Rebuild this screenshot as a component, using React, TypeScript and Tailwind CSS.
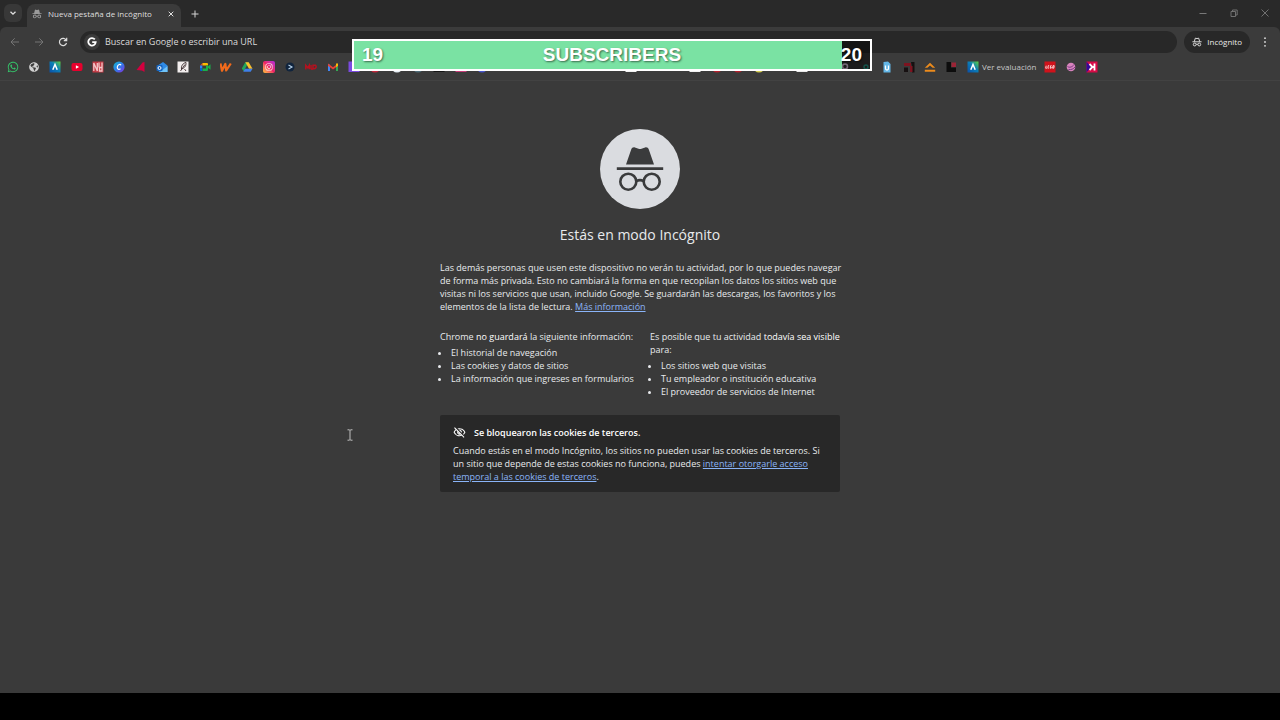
import type { ReactNode } from "react";
import { FaWhatsapp, FaGlobeAmericas, FaInstagram } from "react-icons/fa";

function Svg({ children, box = "0 0 12 12" }: { children: ReactNode; box?: string }) {
  return (
    <svg viewBox={box} className="size-3 shrink-0" aria-hidden="true">
      {children}
    </svg>
  );
}

function IncognitoGlyph({ className }: { className: string }) {
  return (
    <svg viewBox="0 0 24 24" className={className} aria-hidden="true" fill="currentColor">
      <path d="M17.1 2.600c-.2-.9-1.100-1.400-2-1.100L12 2.300l-3.100-.8c-.9-.3-1.800.2-2 1.100L5 9.900H1v2.300h22V9.900h-4z" />
      <path d="M17.300 13.200c-1.900 0-3.400 1.100-4 2.700-.8-.4-1.800-.4-2.600 0-.6-1.600-2.100-2.700-4-2.700a4.600 4.600 0 1 0 4.500 5c.5-.3 1.100-.3 1.600 0a4.600 4.600 0 1 0 4.500-5zM6.700 20.100a2.300 2.300 0 1 1 0-4.600 2.300 2.300 0 0 1 0 4.600zm10.600 0a2.300 2.300 0 1 1 0-4.600 2.300 2.300 0 0 1 0 4.600z" />
    </svg>
  );
}

function BadgeIncognito() {
  return (
    <svg viewBox="0 0 24 24" className="size-[10px]" aria-hidden="true" fill="none" stroke="currentColor" strokeWidth="2.200">
      <path d="M1 11.500h22M5.500 11 8 2.800l4 1 4-1 2.500 8.200" />
      <circle cx="6.500" cy="18" r="3.400" />
      <circle cx="17.500" cy="18" r="3.400" />
      <path d="M10 17.600c1.300-.7 2.700-.7 4 0" />
    </svg>
  );
}

function BigIncognito() {
  return (
    <svg viewBox="0 0 80 80" className="size-20" aria-hidden="true">
      <circle cx="40" cy="40" r="40" fill="#dadce0" />
      <g fill="#3a3b3c">
        <path d="M26 35.500 31.200 20.500c.6-1.700 2-2.500 3.700-2l3.600 1.200c1 .3 2 .3 3 0l3.600-1.200c1.700-.5 3.100.3 3.700 2L54 35.500z" />
        <path d="M16.800 38.200h46.400v2.700H16.800z" />
      </g>
      <g fill="none" stroke="#3a3b3c" strokeWidth="2.600">
        <circle cx="28.300" cy="52.700" r="8" />
        <circle cx="51.700" cy="52.700" r="8" />
        <path d="M36.300 52.200c2.300-1.300 5.100-1.300 7.400 0" />
      </g>
    </svg>
  );
}

function BlueA() {
  return (
    <Svg>
      <defs>
        <linearGradient id="sky" x1="0" y1="1" x2="1" y2="0">
          <stop offset="0" stopColor="#0a4fa8" />
          <stop offset=".55" stopColor="#0b7fb8" />
          <stop offset="1" stopColor="#5fd23c" />
        </linearGradient>
      </defs>
      <path d="M.5.500h11v11H.5z" fill="url(#sky)" />
      <path d="M3.800 8.800 6 3.500l2.200 5.300" fill="none" stroke="#fff" strokeWidth="1.500" />
    </Svg>
  );
}

function Sliver({ color, round = false }: { color: string; round?: boolean }) {
  return (
    <Svg>
      {round ? <circle cx="6" cy="6" r="5.500" fill={color} /> : <path d="M.5.500h11v10.500H.5z" fill={color} />}
    </Svg>
  );
}

type Bookmark = { name: string; icon: ReactNode };

const hidden = (name: string, color: string, round = false): Bookmark => ({
  name,
  icon: <Sliver color={color} round={round} />,
});

const none = "transparent";

const bookmarks: Bookmark[] = [
  { name: "WhatsApp", icon: <FaWhatsapp className="size-3 text-[#35c46a]" /> },
  { name: "Web", icon: <FaGlobeAmericas className="size-3 p-px text-[#d0d0d0]" /> },
  { name: "Aula", icon: <BlueA /> },
  {
    name: "YouTube",
    icon: (
      <Svg>
        <rect x=".5" y="2" width="11" height="8" rx="2" fill="#e8002d" />
        <path d="m4.900 4.300 3.200 1.700-3.200 1.700z" fill="#fff" />
      </Svg>
    ),
  },
  {
    name: "Nd",
    icon: (
      <Svg>
        <path d="M.5.500h11v11H.5z" fill="#c33a45" />
        <path d="M1.800 10V2l3.500 8V2M7 1.500v5M10 1.500V10H7.500V6.500H10" fill="none" stroke="#f3c6c8" strokeWidth="1.300" />
      </Svg>
    ),
  },
  {
    name: "Canva",
    icon: (
      <Svg>
        <defs>
          <linearGradient id="canva" x1="0" y1="0" x2="1" y2="1">
            <stop offset="0" stopColor="#12bcd0" />
            <stop offset=".5" stopColor="#2f7be8" />
            <stop offset="1" stopColor="#8a2be2" />
          </linearGradient>
        </defs>
        <circle cx="6" cy="6" r="5.600" fill="url(#canva)" />
        <path d="M8 4.300C7.400 2.800 5.200 3.300 4.500 5.200c-.8 2.300.6 4.200 3 2.500" fill="none" stroke="#fff" strokeWidth="1.200" />
      </Svg>
    ),
  },
  {
    name: "Red",
    icon: (
      <Svg>
        <path d="M1.500 9 7.500 1.500l2-.5v10L7 9.500z" fill="#d3003f" />
      </Svg>
    ),
  },
  {
    name: "Outlook",
    icon: (
      <Svg>
        <path d="m1 5 6-4 4.500 3.500v6.500H3z" fill="#2f8be6" />
        <path d="m4 11 7.500-6v6z" fill="#6fc3f7" />
        <rect x=".5" y="4" width="6" height="6" rx="1" fill="#1565c0" />
        <circle cx="3.500" cy="7" r="1.500" fill="none" stroke="#fff" />
      </Svg>
    ),
  },
  {
    name: "Pluma",
    icon: (
      <Svg>
        <path d="M.5.500h11v11H.5z" fill="#f2eeee" />
        <path d="M4.500 8C4 5 6 2 9 1.500 9.200 4.500 8 7 4.500 8zM3.500 10 8 3.500M7.500 8l1.500 2" fill="none" stroke="#39292b" strokeWidth=".9" />
      </Svg>
    ),
  },
  {
    name: "Meet",
    icon: (
      <Svg>
        <path d="M1 4.500 3.500 2v2.500z" fill="#ea4335" />
        <path d="M1 4.500h2.300v3H1z" fill="#2684fc" />
        <path d="M1 7.500h2.300V10H2a1 1 0 0 1-1-1z" fill="#0066da" />
        <path d="M3.500 2H8a1 1 0 0 1 1 1v1.500H3.500z" fill="#ffba00" />
        <path d="M3.500 7.500H7V4.500h2v1l2.500-2.200v5.500L9 6.800V9a1 1 0 0 1-1 1H3.500z" fill="#18b04b" />
      </Svg>
    ),
  },
  {
    name: "W",
    icon: (
      <Svg>
        <path d="m.5 2.500 1.500 7.200L5.300 3l.9 6.500L10.800 2.500" fill="none" stroke="#f26a1b" strokeWidth="2.200" strokeLinejoin="round" />
      </Svg>
    ),
  },
  {
    name: "Drive",
    icon: (
      <Svg>
        <path d="M4.300 1.300h3.400l-5 8.900L.8 7.500z" fill="#22a65a" />
        <path d="M4.300 1.300h3.400l3.800 6.400H8z" fill="#fbc02d" />
        <path d="M3.900 7.700h7.600L9.700 10.700H2.300z" fill="#3f7fe8" />
      </Svg>
    ),
  },
  {
    name: "Instagram",
    icon: (
      <span className="grid size-3 place-items-center rounded-xs bg-linear-to-tr from-[#ffc02e] via-[#ee1f63] to-[#b41be0]">
        <FaInstagram className="size-2 text-white" />
      </span>
    ),
  },
  {
    name: "Flecha",
    icon: (
      <Svg>
        <circle cx="6" cy="6" r="4.500" fill="#10243d" />
        <path d="m4.500 4 3.500 2-3.500 2" fill="none" stroke="#b8d4ec" strokeWidth="1.100" />
      </Svg>
    ),
  },
  {
    name: "MU",
    icon: (
      <Svg>
        <path d="M.8 8.500V4.300l2 2.500 1.500-2.500v3.900M6 4v3.200c0 1.500 2 1 2 0V4.200h2.500c1.300 1.500.5 3.800-2 3.600" fill="none" stroke="#b5121f" strokeWidth="1.500" />
      </Svg>
    ),
  },
  {
    name: "Gmail",
    icon: (
      <Svg>
        <path d="M1 3.500h2v6.500H1z" fill="#4285f4" />
        <path d="M9 3.500h2v6.500H9z" fill="#34a853" />
        <path d="m1 2.500 5 3.800 5-3.800v2.300L6 8.500 1 4.800z" fill="#ea4335" />
        <path d="M9 4V2.500h2v2.300L9 6.200z" fill="#fbbc04" />
      </Svg>
    ),
  },
  hidden("Enlace 17", "#7b4be0"),
  hidden("Enlace 18", "#c2273b", true),
  hidden("Enlace 19", "#e6eef5", true),
  hidden("Enlace 20", "#4f6c78", true),
  hidden("Enlace 21", "#151515"),
  hidden("Enlace 22", "#c93a78"),
  hidden("Enlace 23", "#4856cf", true),
  hidden("Enlace 24", none),
  hidden("Enlace 25", none),
  hidden("Enlace 26", none),
  hidden("Enlace 27", none),
  hidden("Enlace 28", none),
  hidden("Enlace 29", none),
  hidden("Enlace 30", "#f1f1f1"),
  hidden("Enlace 31", none),
  hidden("Enlace 32", none),
  hidden("Enlace 33", "#f1f1f1"),
  hidden("Enlace 34", "#b3202c", true),
  hidden("Enlace 35", "#b3202c", true),
  hidden("Enlace 36", "#d6cf52", true),
  hidden("Enlace 37", none),
  hidden("Enlace 38", "#e9e9e9"),
  hidden("Enlace 39", none),
  {
    name: "Enlace 40",
    icon: (
      <Svg>
        <circle cx="6" cy="5.500" r="2.500" fill="none" stroke="#f0d4f2" strokeWidth="1.500" />
      </Svg>
    ),
  },
  {
    name: "Enlace 41",
    icon: (
      <Svg>
        <circle cx="6" cy="6" r="2" fill="none" stroke="#26a896" strokeWidth="1.400" />
      </Svg>
    ),
  },
  {
    name: "U",
    icon: (
      <Svg>
        <path d="M2.500 1 7 .5 9.500 3v8.500h-7z" fill="#63b6e6" />
        <path d="M4.500 4.500v3c0 2 3 2 3 0v-3" fill="none" stroke="#fff" strokeWidth="1.300" />
      </Svg>
    ),
  },
  {
    name: "Rojo",
    icon: (
      <Svg>
        <path d="M1 6.500h4V11H1zM8 1h3.500v10.500H9V6z" fill="#161011" />
        <path d="M1 2h7v3H1zM7 5h2.500v6H7z" fill="#7d1420" />
      </Svg>
    ),
  },
  {
    name: "Naranja",
    icon: (
      <Svg>
        <path d="m.8 6.800 5.200-5 5.200 5H8.600L6 4.400 3.400 6.800zM.8 8.800h10.400v2H.8z" fill="#ec8b1c" />
      </Svg>
    ),
  },
  {
    name: "L",
    icon: (
      <Svg>
        <path d="M1.500 1H6v5.500h5V11H1.500z" fill="#0d0d0d" />
        <path d="M6.500 1.500h4.500V6H6.500z" fill="#9c2436" />
      </Svg>
    ),
  },
];

const trailing: Bookmark[] = [
  {
    name: "LEGO",
    icon: (
      <Svg>
        <path d="M.5.500h11v11H.5z" fill="#d0121b" />
        <path d="M2.200 4.700 1.700 7.200h1.200M5.200 4.700H4.200L3.800 7.200h1M7.600 4.700h-1L6.200 7.200h1l.2-1M9 4.700h1.200L9.800 7.200H8.600z" fill="none" stroke="#fff" strokeWidth=".8" />
      </Svg>
    ),
  },
  {
    name: "Esfera",
    icon: (
      <Svg>
        <circle cx="6" cy="6" r="4.300" fill="#d884bd" />
        <path d="M2.500 5.500c2 1.500 5 .5 6.500-2M3.500 8.500c2.500.5 5-.5 6.500-2.500" fill="none" stroke="#783a86" strokeWidth="1" />
      </Svg>
    ),
  },
  {
    name: "K",
    icon: (
      <Svg>
        <path d="M.5.500h11v11H.5z" fill="#d70b47" />
        <path d="M.5.500 5 6 .5 11.500z" fill="#320a9a" />
        <path d="M8.500 2.500v7M3.500 3l3 3-3 3M6 6h2.500" fill="none" stroke="#fff" strokeWidth="1.800" />
      </Svg>
    ),
  },
];

function BookmarkLink({ name, icon }: Bookmark) {
  return (
    <a href="#" aria-label={name} className="block size-3 shrink-0">
      {icon}
    </a>
  );
}

function inThrees(items: Bookmark[]) {
  const groups: Bookmark[][] = [];
  for (let i = 0; i < items.length; i += 3) groups.push(items.slice(i, i + 3));
  return groups;
}

function TabStrip() {
  return (
    <div className="flex h-[27px] items-end pr-1 pl-1">
      <button aria-label="Buscar pestañas" className="mb-[5px] grid size-[18px] place-items-center rounded-md bg-[#383838] text-[#e0e0e0]">
        <svg viewBox="0 0 8 8" className="size-2" fill="none" stroke="currentColor" strokeWidth="1.300">
          <path d="m1.500 2.700 2.500 2.500 2.500-2.500" />
        </svg>
      </button>
      <div className="ml-[5px] flex h-[23px] w-[154px] items-center rounded-t-lg bg-[#3b3b3b] pr-[5px] pb-[3px] pl-[5px] text-[#dfdfdf]">
        <IncognitoGlyph className="size-[10px] text-[#9a9a9a]" />
        <span className="ml-[6px] flex-1 text-[8px] whitespace-nowrap">Nueva pestaña de incógnito</span>
        <button aria-label="Cerrar pestaña" className="grid size-[10px] place-items-center">
          <svg viewBox="0 0 8 8" className="size-2" fill="none" stroke="currentColor">
            <path d="m1.700 1.700 4.600 4.600M6.300 1.700 1.700 6.300" />
          </svg>
        </button>
      </div>
      <button aria-label="Nueva pestaña" className="mb-2 ml-[9px] text-[#d5d5d5]">
        <svg viewBox="0 0 10 10" className="size-[10px]" fill="none" stroke="currentColor">
          <path d="M5 1.500v7M1.500 5h7" />
        </svg>
      </button>
      <div className="mb-[9px] ml-auto flex items-center gap-[21px] pr-[6px] text-[#787878]">
        <button aria-label="Minimizar">
          <svg viewBox="0 0 10 10" className="size-[10px]" fill="none" stroke="currentColor">
            <path d="M1.500 5.500h7" />
          </svg>
        </button>
        <button aria-label="Restaurar">
          <svg viewBox="0 0 10 10" className="size-[10px]" fill="none" stroke="currentColor" strokeWidth=".9">
            <path d="M2 3.500h4.500V8.500H2zM3.500 3.500V2H8.200v5H6.500" />
          </svg>
        </button>
        <button aria-label="Cerrar">
          <svg viewBox="0 0 10 10" className="size-[10px]" fill="none" stroke="currentColor" strokeWidth=".9">
            <path d="m1.500 1.500 7 7M8.500 1.500l-7 7" />
          </svg>
        </button>
      </div>
    </div>
  );
}

function Toolbar() {
  return (
    <div className="flex h-[30px] items-center pr-[10px] pl-[9px]">
      <button aria-label="Atrás" className="text-[#757575]">
        <svg viewBox="0 0 12 12" className="size-3" fill="none" stroke="currentColor">
          <path d="M10 6H2M5.700 2.300 2 6l3.700 3.700" />
        </svg>
      </button>
      <button aria-label="Adelante" className="ml-3 text-[#757575]">
        <svg viewBox="0 0 12 12" className="size-3" fill="none" stroke="currentColor">
          <path d="M2 6h8M6.300 2.300 10 6 6.300 9.700" />
        </svg>
      </button>
      <button aria-label="Volver a cargar" className="ml-3 text-[#dcdcdc]">
        <svg viewBox="0 0 12 12" className="size-3" fill="none" stroke="currentColor" strokeWidth="1.200">
          <path d="M9.200 4.200A3.600 3.600 0 1 0 9.500 7M9.700 1.800v2.900H6.800" />
        </svg>
      </button>
      <label className="ml-[11px] flex h-[22px] flex-1 items-center gap-[5px] rounded-full bg-[#282828] pl-1">
        <span className="grid size-4 place-items-center rounded-full bg-[#3b3b3b]">
          <svg viewBox="0 0 10 10" className="size-[10px]" fill="none" stroke="#fff" strokeWidth="1.800">
            <path d="M7.800 2.400A3.700 3.700 0 1 0 8.700 5.200H5.200" />
          </svg>
        </span>
        <input
          aria-label="Barra de direcciones"
          placeholder="Buscar en Google o escribir una URL"
          className="w-full flex-1 bg-transparent text-[9px] outline-none placeholder:text-[#dcdcdc]"
        />
      </label>
      <button className="ml-[7px] flex h-[22px] items-center gap-[5px] rounded-full bg-[#282828] pr-2 pl-2 text-[8px] text-[#e8e8e8]">
        <BadgeIncognito />
        Incógnito
      </button>
      <button aria-label="Menú" className="ml-[10px] text-[#dcdcdc]">
        <svg viewBox="0 0 10 10" className="size-[10px]" fill="currentColor">
          <circle cx="5" cy="1.200" r=".9" />
          <circle cx="5" cy="5" r=".9" />
          <circle cx="5" cy="8.800" r=".9" />
        </svg>
      </button>
    </div>
  );
}

function BookmarksBar() {
  return (
    <nav aria-label="Favoritos" className="flex h-6 items-center gap-[10px] border-b border-[#424242] pb-[3px] pl-[7px]">
      {inThrees(bookmarks).map((group) => (
        <div key={group[0].name} className="flex gap-[9px]">
          {group.map((b) => (
            <BookmarkLink key={b.name} {...b} />
          ))}
        </div>
      ))}
      <a href="#" className="flex w-[67px] items-center gap-[3px] text-[8px] whitespace-nowrap text-[#c8c8c8]">
        <BlueA />
        Ver evaluación
      </a>
      <div className="flex gap-[9px]">
        {trailing.map((b) => (
          <BookmarkLink key={b.name} {...b} />
        ))}
      </div>
    </nav>
  );
}

function SubscriberGoal() {
  return (
    <div className="absolute top-[39px] left-[352px] h-8 w-[520px] border-2 border-white bg-black/50 font-['Liberation_Sans',sans-serif] text-[19px] leading-7 font-bold text-white">
      <div className="h-full w-[488px] bg-[#7ae2a3]" />
      <div className="absolute inset-0 grid grid-cols-3 pr-2 pl-2 [text-shadow:1px_1px_2px_#0008]">
        <span>19</span>
        <span className="text-center">SUBSCRIBERS</span>
        <span className="text-right">20</span>
      </div>
    </div>
  );
}

const linkClass = "text-[#8ab4f8] underline";

export default function App() {
  return (
    <div className="relative flex min-h-screen flex-col bg-[#292929] font-['Open_Sans','Noto_Sans',sans-serif]">
      <header>
        <TabStrip />
        <div className="rounded-t-md bg-[#3b3b3b]">
          <Toolbar />
          <BookmarksBar />
        </div>
      </header>
      <SubscriberGoal />
      <main className="flex flex-1 flex-col items-center bg-[#3a3a3a] pt-12 text-[9px] leading-[13px] text-[#e8eaed]">
        <BigIncognito />
        <h1 className="mt-[14px] text-[14px] leading-6">Estás en modo Incógnito</h1>
        <div className="mt-[14px] w-[400px]">
          <p className="whitespace-nowrap">
            Las demás personas que usen este dispositivo no verán tu actividad, por lo que puedes navegar
            <br />
            de forma más privada. Esto no cambiará la forma en que recopilan los datos los sitios web que
            <br />
            visitas ni los servicios que usan, incluido Google. Se guardarán las descargas, los favoritos y los
            <br />
            elementos de la lista de lectura.{" "}
            <a href="#" className={linkClass}>
              Más información
            </a>
          </p>
          <div className="mt-[17px] grid grid-cols-2 gap-5 whitespace-nowrap">
            <section>
              <p>
                Chrome <em className="font-medium text-white not-italic">no guardará</em> la siguiente información:
              </p>
              <ul className="mt-[3px] list-disc pl-[11px]">
                <li>El historial de navegación</li>
                <li>Las cookies y datos de sitios</li>
                <li>La información que ingreses en formularios</li>
              </ul>
            </section>
            <section>
              <p>
                Es posible que tu actividad <em className="font-medium text-white not-italic">todavía sea visible</em>
                <br />
                para:
              </p>
              <ul className="mt-[3px] list-disc pl-[11px]">
                <li>Los sitios web que visitas</li>
                <li>Tu empleador o institución educativa</li>
                <li>El proveedor de servicios de Internet</li>
              </ul>
            </section>
          </div>
          <section className="mt-[17px] rounded-xs bg-[#282828] px-[13px] pt-[11px] pb-[9px] whitespace-nowrap">
            <h2 className="flex items-center gap-2 font-semibold text-white">
              <svg viewBox="0 0 24 24" className="size-[13px]" fill="currentColor" aria-hidden="true">
                <path d="M12 6a9.800 9.800 0 0 1 8.800 5.500 9.800 9.800 0 0 1-2.400 3.100l1.400 1.400a11.800 11.800 0 0 0 3.200-4.500A11.800 11.800 0 0 0 8.400 4.600L10 6.200c.7-.1 1.300-.2 2-.2zm-1.100 1.100L13 9.200c.6.300 1 .7 1.300 1.300l2.100 2.100a4.500 4.500 0 0 0-5.500-5.500zM2 3.900l2.700 2.700A11.800 11.800 0 0 0 1 11.500 11.800 11.800 0 0 0 16.300 18.200l3.400 3.400 1.400-1.400L3.400 2.500zm7.500 7.500 2.600 2.600h-.1a2.500 2.500 0 0 1-2.500-2.500zM6.100 8l1.800 1.800a4.500 4.500 0 0 0 5.800 5.800l1 1A9.800 9.800 0 0 1 3.200 11.500 9.900 9.900 0 0 1 6.100 8z" />
              </svg>
              Se bloquearon las cookies de terceros.
            </h2>
            <p className="mt-[5px]">
              Cuando estás en el modo Incógnito, los sitios no pueden usar las cookies de terceros. Si
              <br />
              un sitio que depende de estas cookies no funciona, puedes{" "}
              <a href="#" className={linkClass}>
                intentar otorgarle acceso
                <br />
                temporal a las cookies de terceros
              </a>
              .
            </p>
          </section>
        </div>
      </main>
      <footer className="h-[27px] bg-black" />
      <svg viewBox="0 0 8 12" className="absolute top-[429px] left-[346px] h-3 w-2" fill="none" stroke="#cfcfcf" strokeWidth=".9" aria-hidden="true">
        <path d="M1.500.8h2L4 1.500l.5-.7h2M4 1.500v9M1.500 11.200h2l.5-.7.5.7h2" />
      </svg>
    </div>
  );
}
